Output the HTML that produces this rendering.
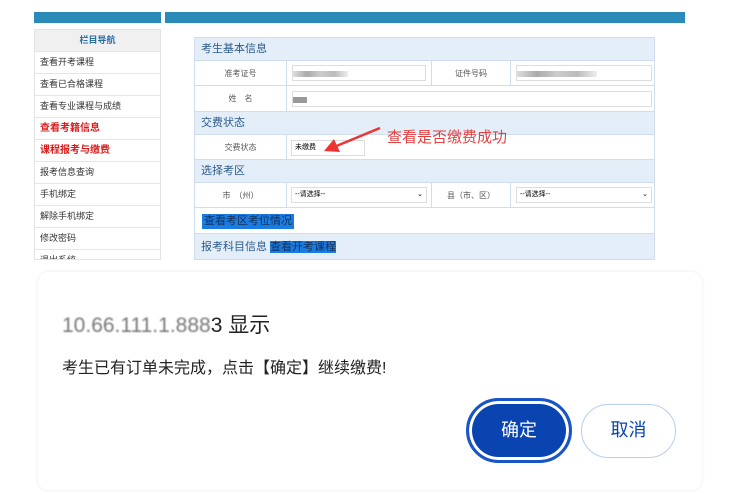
<!DOCTYPE html>
<html><head><meta charset="utf-8"><style>
*{margin:0;padding:0;box-sizing:border-box}
body{width:750px;height:495px;background:#fff;position:relative;overflow:hidden;font-family:"Liberation Sans","Noto Sans CJK SC",sans-serif}
.a{position:absolute}
.bar{background:#2a8ab8;top:12px;height:11px}
.side{left:34px;top:29px;width:127px;height:231px;border:1px solid #e3e3e3;background:#fff;overflow:hidden}
.side div{height:22px;border-bottom:1px solid #e6e6e6;font-size:9px;line-height:21px;padding-left:5px;color:#333}
.side .h{background:#f0f0f0;color:#2a6fa8;text-align:center;font-weight:bold;padding:0}
.side .r{color:#d81e1e;font-weight:bold;font-size:10px}
.main{left:194px;top:37px;width:461px;height:223px;border:1px solid #cfdeee;overflow:hidden}
.sec{position:absolute;left:0;width:461px;background:#e3eef8;color:#2c5a8a;font-size:11px;padding-left:6px;border-bottom:1px solid #cfdeee}
.row{position:absolute;left:0;width:461px;border-bottom:1px solid #cfdeee;background:#fff}
.lab{position:absolute;top:0;height:100%;font-size:8px;color:#555;text-align:center;border-right:1px solid #cfdeee}
.inp{position:absolute;border:1px solid #ddd;background:#fff;height:16px;font-size:7px;line-height:14px;padding-left:3px}
.blur{position:absolute;background:linear-gradient(90deg,#ddd,#aaa,#ccc,#bbb,#eee);height:6px}
.dlg{left:38px;top:272px;width:664px;height:218px;background:#fff;border-radius:10px;box-shadow:0 0 3px rgba(0,0,0,.1)}
</style></head><body>
<div class="a bar" style="left:34px;width:127px"></div>
<div class="a bar" style="left:165px;width:520px"></div>
<div class="a side">
<div class="h">栏目导航</div><div>查看开考课程</div><div>查看已合格课程</div><div>查看专业课程与成绩</div><div class="r">查看考籍信息</div><div class="r">课程报考与缴费</div><div>报考信息查询</div><div>手机绑定</div><div>解除手机绑定</div><div>修改密码</div><div>退出系统</div>
</div>
<div class="a main">
<div class="sec" style="top:0;height:23px;line-height:23px">考生基本信息</div>
<div class="row" style="top:23px;height:25px"><div class="lab" style="left:0;width:92px;line-height:25px">准考证号</div><div class="inp" style="left:97px;top:4px;width:134px"></div><div class="blur" style="left:98px;top:10px;width:55px"></div><div class="lab" style="left:236px;width:80px;line-height:25px;border-left:1px solid #cfdeee">证件号码</div><div class="inp" style="left:321px;top:4px;width:136px"></div><div class="blur" style="left:322px;top:10px;width:80px"></div></div>
<div class="row" style="top:48px;height:26px"><div class="lab" style="left:0;width:92px;line-height:26px">姓　名</div><div class="inp" style="left:97px;top:5px;width:360px"></div><div class="blur" style="left:98px;top:11px;width:14px;background:#999"></div></div>
<div class="sec" style="top:74px;height:23px;line-height:23px">交费状态</div>
<div class="row" style="top:97px;height:25px"><div class="lab" style="left:0;width:92px;line-height:25px">交费状态</div><div class="inp" style="left:96px;top:5px;width:74px">未缴费</div></div>
<div class="sec" style="top:122px;height:23px;line-height:23px">选择考区</div>
<div class="row" style="top:145px;height:25px"><div class="lab" style="left:0;width:92px;line-height:25px">市　（州）</div><div class="inp" style="left:96px;top:4px;width:136px">--请选择--<span style="position:absolute;right:3px">⌄</span></div><div class="lab" style="left:236px;width:80px;line-height:25px;border-left:1px solid #cfdeee">县（市、区）</div><div class="inp" style="left:321px;top:4px;width:136px">--请选择--<span style="position:absolute;right:3px">⌄</span></div></div>
<div class="row" style="top:170px;height:26px"><span style="position:absolute;left:7px;top:6px;background:#1a7be0;color:#12305a;font-size:11px;padding:0 2px;line-height:15px">查看考区考位情况</span></div>
<div class="sec" style="top:196px;height:27px;line-height:27px">报考科目信息 <span style="background:#1a7be0;color:#12305a">查看开考课程</span></div>
</div>
<svg class="a" style="left:320px;top:120px" width="70" height="40"><line x1="60" y1="8" x2="14" y2="27" stroke="#e33" stroke-width="2.5"/><polygon points="4,31 14,19 20,32" fill="#e33"/></svg>
<div class="a" style="left:387px;top:126px;color:#e34040;font-size:15px">查看是否缴费成功</div>
<div class="a dlg">
<div class="a" style="left:24px;top:37px;font-size:21px;color:#222"><span style="color:#777;filter:blur(0.8px)">10.66.111.1.888</span>3 显示</div>
<div class="a" style="left:24px;top:82px;font-size:16px;color:#222">考生已有订单未完成，点击【确定】继续缴费!</div>
<div class="a" style="left:428px;top:126px;width:106px;height:65px;border-radius:33px;background:#0a44b0;border:3px solid #1a55c8;box-shadow:inset 0 0 0 3px #fff"><div style="text-align:center;line-height:59px;color:#fff;font-size:18px">确定</div></div>
<div class="a" style="left:543px;top:132px;width:95px;height:54px;border-radius:27px;border:1.5px solid #b8cdf0;text-align:center;line-height:51px;color:#0a44b0;font-size:18px">取消</div>
</div>
</body></html>
